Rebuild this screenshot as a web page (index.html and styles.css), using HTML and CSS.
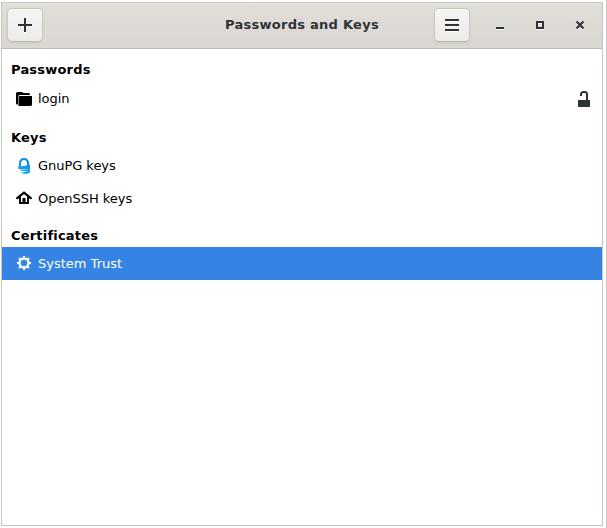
FILE: index.html
```
<!DOCTYPE html>
<html lang="en">
<head>
<meta charset="utf-8">
<title>Passwords and Keys</title>
<link rel="stylesheet" href="styles.css">
</head>
<body>
<main class="window">
  <header class="headerbar">
    <button class="button" aria-label="Add"><svg width="16" height="16" viewBox="0 0 16 16"><path d="M7 1h2v6h6v2H9v6H7V9H1V7h6z"/></svg></button>
    <h1 class="title">Passwords and Keys</h1>
    <button class="button menu" aria-label="Menu"><svg width="16" height="16" viewBox="0 0 16 16"><path d="M1 2h14v2H1zM1 7h14v2H1zM1 12h14v2H1z"/></svg></button>
    <div class="controls">
      <svg width="16" height="16" viewBox="0 0 16 16"><path d="M4 10h8v2H4z"/></svg>
      <svg width="16" height="16" viewBox="0 0 16 16"><path fill-rule="evenodd" d="M4 4h8v8H4zM6 6v4h4V6z"/></svg>
      <svg width="16" height="16" viewBox="0 0 16 16"><path d="M4.500 4.500l7 7M11.500 4.500l-7 7" fill="none" stroke="#2e3436" stroke-width="2.200"/></svg>
    </div>
  </header>
  <section>
    <h2 class="heading">Passwords</h2>
    <div class="row">
      <svg class="icon" width="16" height="16" viewBox="0 0 16 16"><path d="M0 2.500Q0 1 1.500 1H6L7.500 2H12.500Q14 2 14 3.500V4H4Q2 4 2 6V13.500Q0 14 0 12zM3.500 5H16v8.500q0 1.500-1.500 1.500H2.500V6.500Q2.500 5 3.500 5z"/></svg>
      <span>login</span>
      <svg class="lock" width="16" height="16" viewBox="0 0 16 16"><path d="M2 9h12v6q0 1-1 1H3q-1 0-1-1z"/><path d="M5 5V3.500Q5 1 7.500 1h1.500Q11 1 11 3.500V9" fill="none" stroke="#2e3436" stroke-width="2"/></svg>
    </div>
  </section>
  <section>
    <h2 class="heading keys">Keys</h2>
    <div class="row">
      <svg class="icon" width="16" height="16" viewBox="0 0 16 16"><path d="M4 8.500V5.500Q4 1 8 1T12 5.500V8" fill="none" stroke="#0c91dc" stroke-width="2"/><path fill="#129bea" d="M2 8.500Q8 8.500 14 6.500V11Q8 11.500 2 10.800zM4 11.300Q9 12.500 14 11V13Q9 14 4 12.300zM3 13.700Q9 14.500 14 13V14.500L11 15.700H4L9 15z"/></svg>
      <span>GnuPG keys</span>
    </div>
    <div class="row">
      <svg class="icon house" width="16" height="16" viewBox="0 0 16 16"><path d="M1.200 8.200L8 2.600l6.800 5.600" fill="none" stroke="#000" stroke-width="2.200" stroke-linecap="round"/><path d="M3 7l2-1V12h1.500V8h3v4H11V6l2 1v7H3z"/></svg>
      <span>OpenSSH keys</span>
    </div>
  </section>
  <section>
    <h2 class="heading certificates">Certificates</h2>
    <div class="row selected">
      <svg class="icon gear" width="16" height="16" viewBox="0 0 16 16"><g fill="none" stroke="#f5f8fc"><circle cx="8" cy="8" r="4.500" stroke-width="2.400"/><path stroke-width="2" d="M8 1v3M8 12v3M1 8h3M12 8h3M3 3l2 2M11 11l2 2M3 13l2-2M11 5l2-2"/></g></svg>
      <span>System Trust</span>
    </div>
  </section>
</main>
</body>
</html>
```
FILE: styles.css
```
* { box-sizing: border-box; }
body {
  margin: 0;
  height: 528px;
  padding: 2px 3px 2px 1px;
  overflow: hidden;
  background: #fff;
  border-right: 1px solid #c9c5c1;
  font: 13px/16px "DejaVu Sans", sans-serif;
  color: #000;
}
.window {
  width: 602px;
  height: 524px;
  border: 1px solid #c8c4bf;
}
.headerbar {
  height: 46px;
  display: grid;
  grid-template-columns: 36px 1fr 36px 132px;
  align-items: center;
  padding: 0 0 1px 5px;
  background: linear-gradient(#e1deda, #dad6d2);
  border-bottom: 1px solid #bfb8b1;
  box-shadow: inset 0 1px #e6e3e0;
}
.button {
  width: 36px;
  height: 34px;
  padding: 0;
  display: grid;
  place-items: center;
  border: 1px solid #cdc7c2;
  border-bottom-color: #bfb8b1;
  border-radius: 5px;
  background: linear-gradient(#f6f5f4, #edebe9);
  box-shadow: 0 1px 2px rgba(0, 0, 0, .07);
}
svg { display: block; fill: #2e3436; flex: none; }
.title {
  margin: 0 0 0 182px;
  font-size: 13px;
  line-height: 16px;
  font-weight: bold;
  letter-spacing: .27px;
  color: #2e3436;
  white-space: nowrap;
}
.controls { display: flex; gap: 24px; padding-left: 22px; }
.controls svg, .button svg { filter: drop-shadow(0 1px 0 rgba(255, 255, 255, .8)); }
.heading {
  margin: 0;
  height: 33px;
  padding: 13px 9px 0;
  font-size: 13px;
  line-height: 16px;
  letter-spacing: .2px;
}
.keys { height: 34px; padding-top: 15px; }
.certificates { height: 32px; }
.row {
  height: 33px;
  display: flex;
  align-items: center;
  gap: 6px;
  padding: 0 10px 0 14px;
  letter-spacing: -.04px;
}
.icon { fill: #000; }
.house, .gear { margin-bottom: 1px; }
.lock { margin-left: auto; }
.selected { background: #3584e4; color: #fff; letter-spacing: 0; }
```
